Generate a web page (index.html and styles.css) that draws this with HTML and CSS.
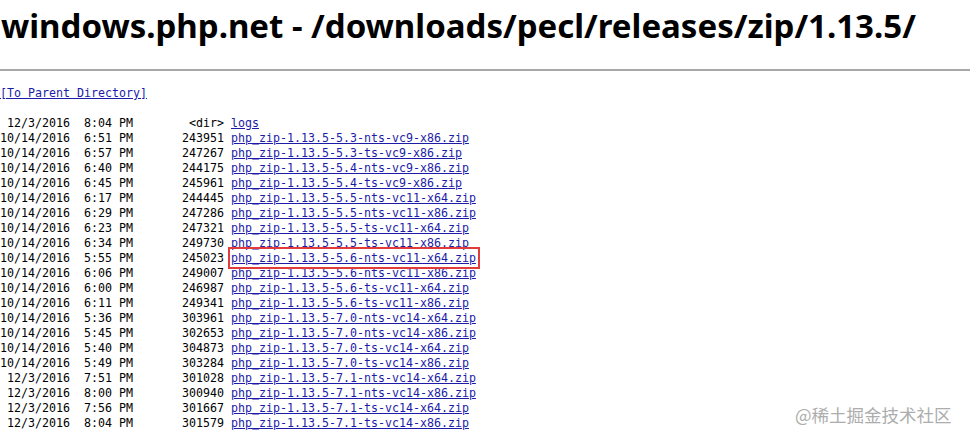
FILE: index.html
```html
<!DOCTYPE html>
<html lang="en">
<head>
    <meta charset="UTF-8">
    <title>windows.php.net - /downloads/pecl/releases/zip/1.13.5/</title>
    <link rel="stylesheet" href="styles.css">
</head>
<body>
    <h1>windows.php.net - /downloads/pecl/releases/zip/1.13.5/</h1>
    <hr>

    <pre class="listing"><a href="#">[To Parent Directory]</a>

 12/3/2016  8:04 PM        &lt;dir&gt; <a href="#">logs</a>
10/14/2016  6:51 PM       243951 <a href="#">php_zip-1.13.5-5.3-nts-vc9-x86.zip</a>
10/14/2016  6:57 PM       247267 <a href="#">php_zip-1.13.5-5.3-ts-vc9-x86.zip</a>
10/14/2016  6:40 PM       244175 <a href="#">php_zip-1.13.5-5.4-nts-vc9-x86.zip</a>
10/14/2016  6:45 PM       245961 <a href="#">php_zip-1.13.5-5.4-ts-vc9-x86.zip</a>
10/14/2016  6:17 PM       244445 <a href="#">php_zip-1.13.5-5.5-nts-vc11-x64.zip</a>
10/14/2016  6:29 PM       247286 <a href="#">php_zip-1.13.5-5.5-nts-vc11-x86.zip</a>
10/14/2016  6:23 PM       247321 <a href="#">php_zip-1.13.5-5.5-ts-vc11-x64.zip</a>
10/14/2016  6:34 PM       249730 <a href="#">php_zip-1.13.5-5.5-ts-vc11-x86.zip</a>
10/14/2016  5:55 PM       245023 <a href="#" class="marked">php_zip-1.13.5-5.6-nts-vc11-x64.zip</a>
10/14/2016  6:06 PM       249007 <a href="#">php_zip-1.13.5-5.6-nts-vc11-x86.zip</a>
10/14/2016  6:00 PM       246987 <a href="#">php_zip-1.13.5-5.6-ts-vc11-x64.zip</a>
10/14/2016  6:11 PM       249341 <a href="#">php_zip-1.13.5-5.6-ts-vc11-x86.zip</a>
10/14/2016  5:36 PM       303961 <a href="#">php_zip-1.13.5-7.0-nts-vc14-x64.zip</a>
10/14/2016  5:45 PM       302653 <a href="#">php_zip-1.13.5-7.0-nts-vc14-x86.zip</a>
10/14/2016  5:40 PM       304873 <a href="#">php_zip-1.13.5-7.0-ts-vc14-x64.zip</a>
10/14/2016  5:49 PM       303284 <a href="#">php_zip-1.13.5-7.0-ts-vc14-x86.zip</a>
 12/3/2016  7:51 PM       301028 <a href="#">php_zip-1.13.5-7.1-nts-vc14-x64.zip</a>
 12/3/2016  8:00 PM       300940 <a href="#">php_zip-1.13.5-7.1-nts-vc14-x86.zip</a>
 12/3/2016  7:56 PM       301667 <a href="#">php_zip-1.13.5-7.1-ts-vc14-x64.zip</a>
 12/3/2016  8:04 PM       301579 <a href="#">php_zip-1.13.5-7.1-ts-vc14-x86.zip</a>
</pre>

    <div class="watermark">@稀土掘金技术社区</div>
</body>
</html>
```

FILE: styles.css
```css
body {
    margin: 0;
    background-color: #fff;
    color: #000;
}
h1 {
    font-family: "Noto Sans", sans-serif;
    font-weight: bold;
    font-size: 33px;
    line-height: 40px;
    margin: 0;
    padding: 6px 0 0 1px;
    white-space: nowrap;
}
hr {
    border: none;
    border-top: 2px solid #a8a8a8;
    margin: 23px 0 0 0;
}
.listing {
    font-family: "DejaVu Sans Mono", monospace;
    font-size: 11.63px;
    line-height: 15px;
    margin: 15px 0 0 0;
}
.listing a {
    color: #1c1ca8;
}
.marked {
    outline: 2px solid #e23b3b;
    outline-offset: 1px;
    padding: 1px 1px 1px 0;
}
.watermark {
    position: absolute;
    left: 795px;
    top: 402px;
    font-family: "Noto Sans CJK SC", sans-serif;
    font-size: 17.5px;
    color: #adadad;
}
```
